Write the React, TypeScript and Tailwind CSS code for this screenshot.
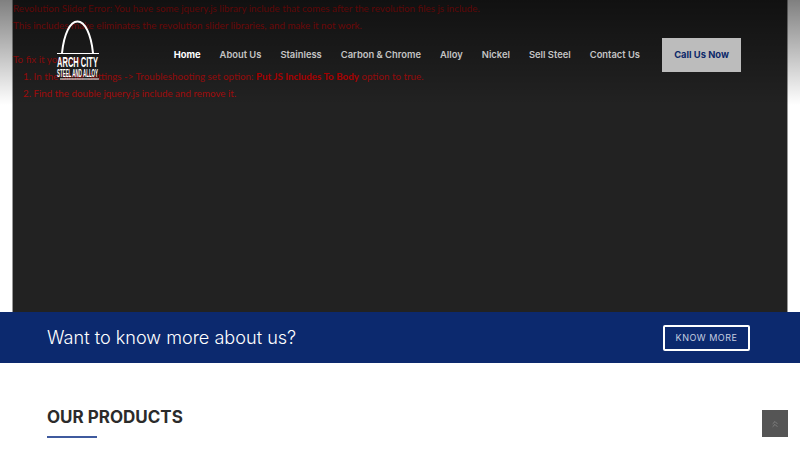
import { ChevronsUp } from 'lucide-react';

const NAV_ITEMS = ['About Us', 'Stainless', 'Carbon & Chrome', 'Alloy', 'Nickel', 'Sell Steel', 'Contact Us'];

function Logo() {
  return (
    <svg width="46" height="62" viewBox="0 0 46 62" className="shrink-0">
      <path d="M6 33 C8 14 14 1.5 21.5 1.5 C29 1.5 35 14 37 33" fill="none" stroke="#fff" strokeWidth="2" />
      <line x1="1" y1="33.5" x2="43" y2="33.5" stroke="#fff" strokeWidth="1" />
      <text x="1" y="47" textLength="41" lengthAdjust="spacingAndGlyphs" fill="#fff" fontSize="14" fontWeight="700" fontFamily="Liberation Sans, sans-serif">ARCH CITY</text>
      <text x="1" y="57" textLength="41" lengthAdjust="spacingAndGlyphs" fill="#fff" fontSize="10" fontWeight="700" fontFamily="Liberation Sans, sans-serif">STEEL AND ALLOY</text>
      <line x1="4" y1="59" x2="43" y2="59" stroke="#fff" strokeWidth="1" />
    </svg>
  );
}

function Header() {
  return (
    <header className="absolute inset-x-0 top-0 h-[105px] bg-gradient-to-b from-black/50 to-black/0">
      <div className="flex items-start pl-[56px] pr-[59px] pt-[20px]">
        <Logo />
        <nav className="ml-auto flex items-center gap-[19px] pt-[18px] text-[9.4px] font-semibold text-[#c4c4c4] [font-family:Inter,sans-serif]">
          <a className="font-bold text-white">Home</a>
          {NAV_ITEMS.map(item => (
            <a key={item}>{item}</a>
          ))}
          <a className="ml-[3px] flex h-[34px] w-[79px] items-center justify-center bg-[#bcbcbc] font-bold text-[#0c2869]">
            Call Us Now
          </a>
        </nav>
      </div>
    </header>
  );
}

export default function App() {
  return (
    <div className="relative h-[450px] w-[800px] overflow-hidden bg-white">
      <section className="mx-[12px] h-[312px] border-x border-[#999999] bg-[#222222] text-[9.8px] leading-[17px] text-[#a80c0c] [font-family:Lato,sans-serif]">
        <p>Revolution Slider Error: You have some jquery.js library include that comes after the revolution files js include.</p>
        <p>This includes make eliminates the revolution slider libraries, and make it not work.</p>
        <p className="mt-[17px]">To fix it you can:</p>
        <ol className="ml-[10px]">
          <li>1. In the Slider Settings -&gt; Troubleshooting set option: <strong className="text-[#c00000]">Put JS Includes To Body</strong> option to true.</li>
          <li>2. Find the double jquery.js include and remove it.</li>
        </ol>
      </section>
      <Header />
      <section className="flex h-[51px] items-center justify-between bg-[#0c296e] pl-[47px] pr-[50px] text-white [font-family:Inter,sans-serif]">
        <h2 className="text-[18.1px] font-light">Want to know more about us?</h2>
        <a className="flex h-[26px] w-[87px] items-center justify-center rounded-[2px] border-2 border-white text-[9px] tracking-[0.5px] text-[#c5cde0]">
          KNOW MORE
        </a>
      </section>
      <section className="pl-[47px] pt-[44px] [font-family:Inter,sans-serif]">
        <h2 className="text-[17px] font-bold leading-[20px] text-[#2b2b2b]">OUR PRODUCTS</h2>
        <div className="mt-[9px] h-[2px] w-[50px] bg-[#3f5a9e]" />
      </section>
      <button className="absolute left-[762px] top-[410px] flex h-[27px] w-[26px] items-center justify-center bg-[#555555] text-[#888888]">
        <ChevronsUp size={10} />
      </button>
    </div>
  );
}
